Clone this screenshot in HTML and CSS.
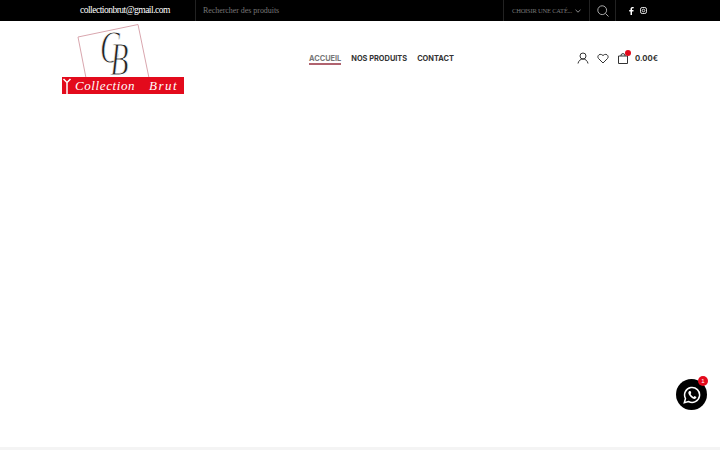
FILE: index.html
```html
<!DOCTYPE html>
<html lang="fr">

<head>
    <meta charset="UTF-8">
    <meta name="viewport" content="width=device-width, initial-scale=1.0">
    <title>Collection Brut</title>
    <link rel="stylesheet" href="styles.css">
</head>

<body>
    <!-- Top bar -->
    <div class="topbar">
        <div class="top-email">collectionbrut@gmail.com</div>
        <div class="top-search">Rechercher des produits</div>
        <div class="top-cat">
            <span>CHOISIR UNE CATÉ...</span>
            <svg width="6" height="4" viewBox="0 0 6 4"><path d="M.5.8 3 3.2 5.5.8" fill="none" stroke="#8a8a8a" stroke-width="1"/></svg>
        </div>
        <div class="top-icon">
            <svg width="12" height="12" viewBox="0 0 12 12"><circle cx="5.2" cy="5.2" r="4.4" fill="none" stroke="#aaa" stroke-width="1"/><path d="M8.4 8.4 11.5 11.5" stroke="#aaa" stroke-width="1"/></svg>
        </div>
        <div class="top-social">
            <svg width="5" height="8" viewBox="0 0 5 8"><path d="M1.5 8V4.4H.2V3h1.3V2C1.5.7 2.3 0 3.4 0H4.7V1.3H3.8C3.2 1.3 3 1.6 3 2.1V3H4.6L4.4 4.4H3V8Z" fill="#fff"/></svg>
            <svg width="7" height="7" viewBox="0 0 7 7"><rect x=".5" y=".5" width="6" height="6" rx="1.7" fill="none" stroke="#ddd" stroke-width="1"/><circle cx="3.5" cy="3.5" r="1.3" fill="none" stroke="#ddd" stroke-width="1"/></svg>
        </div>
    </div>

    <!-- Header -->
    <header class="header">
        <svg class="logo" width="123" height="72" viewBox="0 0 123 72">
            <path d="M16 13 76 .5 87 54H24Z" fill="#fff" stroke="#d9a6ae" stroke-width="1"/>
            <text class="logo-cb" transform="translate(38 39) scale(.65 1)">C<tspan dx="-15" dy="12">B</tspan></text>
            <rect x="0" y="53" width="122" height="17" fill="#e30a1c"/>
            <path d="M1.5 55 5 58.5 8.5 55M5 58.5V70" fill="none" stroke="#fff" stroke-width="1.5"/>
            <text class="logo-name" x="13" y="66">Collection <tspan class="logo-brut" x="87">Brut</tspan></text>
        </svg>

        <nav class="nav">
            <a class="nav-link active">ACCUEIL</a>
            <a class="nav-link">NOS PRODUITS</a>
            <a class="nav-link">CONTACT</a>
        </nav>

        <div class="tools">
            <svg width="12" height="12" viewBox="0 0 12 12"><circle cx="6" cy="4" r="3" fill="none" stroke="#333" stroke-width="1"/><path d="M1 11.5C1.5 8.8 3.5 7 6 7S10.5 8.8 11 11.5" fill="none" stroke="#333" stroke-width="1"/></svg>
            <svg width="12" height="11" viewBox="0 0 12 11"><path d="M6 10 1.5 5.5C-.5 3 2.8-.5 6 2.5 9.2-.5 12.5 3 10.500 5.5Z" fill="none" stroke="#333" stroke-width="1"/></svg>
            <div class="cart">
                <svg width="10" height="11" viewBox="0 0 10 11"><path d="M.5 3H9.5V10.5H.5ZM3 3V2C3 .2 7 .2 7 2V3" fill="none" stroke="#333" stroke-width="1"/></svg>
                <span class="cart-dot"></span>
            </div>
            <div class="total">0.00€</div>
        </div>
    </header>

    <main class="content"></main>

    <!-- Whatsapp button -->
    <div class="chat">
        <svg width="18" height="18" viewBox="0 0 18 18">
            <path d="M1.3 16.7 2.5 12.5A7.5 7.5 0 1 1 5.5 15.5Z" fill="none" stroke="#fff" stroke-width="1.5"/>
            <path d="M6.3 5C5.2 5.8 5 7 6 8.8 7.2 11 9.4 12.8 11.2 12.9 12.4 13 13.5 12 13.4 11L11.6 10 10.6 10.9C9.4 10.4 8.2 9.2 7.6 8L8.3 7 7.5 5Z" fill="#fff"/>
        </svg>
        <span class="chat-badge">1</span>
    </div>
</body>

</html>
```
FILE: styles.css
```css
* {
    box-sizing: border-box;
}

html,
body {
    height: 100%;
}

body {
    font-family: "Liberation Serif", serif;
    margin: 0;
    display: flex;
    flex-direction: column;
    background-color: #fff;
    overflow: hidden;
}

.topbar {
    display: flex;
    align-items: stretch;
    height: 21px;
    padding-left: 80px;
    background-color: #000;
    color: #fff;
    line-height: 21px;
    white-space: nowrap;
}

.top-email {
    width: 116px;
    font-size: 9.5px;
    letter-spacing: -0.5px;
    border-right: 1px solid #222;
}

.top-search {
    width: 308px;
    padding-left: 7px;
    font-size: 8px;
    letter-spacing: -0.05px;
    color: #777;
    border-right: 1px solid #222;
}

.top-cat {
    display: flex;
    align-items: center;
    justify-content: space-between;
    width: 86px;
    padding: 0 8px;
    font-size: 6.5px;
    letter-spacing: -0.2px;
    color: #777;
    border-right: 1px solid #222;
}

.top-icon {
    display: flex;
    align-items: center;
    justify-content: center;
    width: 26px;
    border-right: 1px solid #222;
}

.top-social {
    display: flex;
    align-items: center;
    gap: 6px;
    padding-left: 13px;
}

.header {
    display: flex;
    align-items: flex-start;
    height: 76px;
    padding: 3px 62px 0 62px;
}

.logo {
    flex-shrink: 0;
}

.logo-cb {
    font-family: "Liberation Serif", serif;
    font-style: italic;
    font-size: 46px;
    fill: #222;
    stroke: #fff;
    stroke-width: 1px;
}

.logo-name {
    font-family: "Liberation Serif", serif;
    font-style: italic;
    font-size: 13px;
    letter-spacing: 0.6px;
    fill: #fff;
}

.logo-brut {
    letter-spacing: 1.5px;
}

.nav {
    display: flex;
    gap: 10px;
    margin-left: 124px;
    margin-top: 30px;
}

.nav-link {
    font-family: Inter, sans-serif;
    font-size: 7.4px;
    font-weight: 700;
    line-height: 9px;
    color: #333;
}

.nav-link.active {
    color: #777;
    border-bottom: 2px solid #b0636f;
}

.tools {
    display: flex;
    align-items: center;
    gap: 8px;
    margin-left: auto;
    margin-top: 28px;
}

.cart {
    position: relative;
    display: flex;
    margin-left: 1px;
}

.cart-dot {
    position: absolute;
    top: -3px;
    right: -3px;
    width: 6px;
    height: 6px;
    border-radius: 50%;
    background-color: #e30a1c;
}

.total {
    font-family: Inter, sans-serif;
    font-size: 7.7px;
    font-weight: 700;
    color: #333;
    margin-left: -1px;
}

.content {
    flex: 1;
    border-bottom: 3px solid #f4f4f4;
}

.chat {
    position: absolute;
    left: 676px;
    top: 379px;
    display: flex;
    align-items: center;
    justify-content: center;
    width: 31px;
    height: 31px;
    border-radius: 50%;
    background-color: #000;
}

.chat-badge {
    position: absolute;
    top: -3px;
    right: -1px;
    width: 10px;
    height: 10px;
    border-radius: 50%;
    background-color: #e30a1c;
    color: #fff;
    font-family: "Liberation Sans", sans-serif;
    font-size: 6px;
    line-height: 10px;
    text-align: center;
}
```
